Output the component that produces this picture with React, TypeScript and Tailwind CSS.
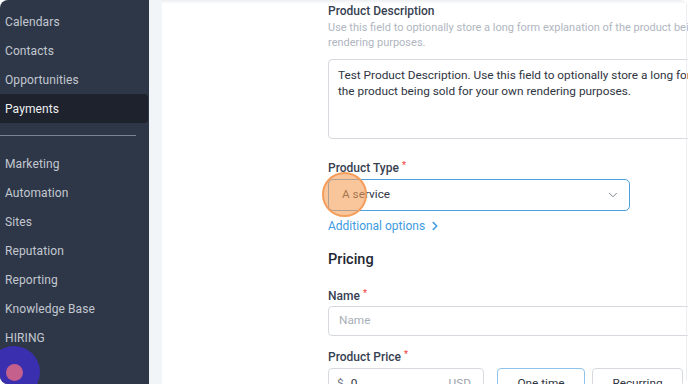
import { ChevronDown, ChevronRight } from "lucide-react";

const topItems = ["Calendars", "Contacts", "Opportunities", "Payments"];
const bottomItems = ["Marketing", "Automation", "Sites", "Reputation", "Reporting", "Knowledge Base", "HIRING"];

function NavItem({ label, active }: { label: string; active?: boolean }) {
    return (
        <div
            className={
                active
                    ? "h-[29px] flex items-center pl-[5px] mr-[1px] rounded-r-[4px] bg-[#1e222c] text-[#eef0f3]"
                    : "h-[29px] flex items-center pl-[5px] text-[#c3c8d0]"
            }
        >
            {label}
        </div>
    );
}

function Req() {
    return <span className="text-[#ef4444] text-[9px] align-top ml-[3px] relative top-[-3px]">*</span>;
}

export default function App() {
    return (
        <div className="w-[688px] h-[384px] overflow-hidden rounded-[8px] flex bg-white font-['Roboto',sans-serif] relative">
            <aside className="w-[149px] shrink-0 bg-[#2e3748] text-[12px] tracking-[0.1px] pt-[7px] relative">
                {topItems.map((i) => (
                    <NavItem key={i} label={i} active={i === "Payments"} />
                ))}
                <div className="h-px w-[136px] bg-[#7b8290] mt-[12px] mb-[13px]" />
                {bottomItems.map((i) => (
                    <NavItem key={i} label={i} />
                ))}
                {/* click marker */}
                <div className="absolute left-[-12px] top-[346px] w-[52px] h-[52px] rounded-full bg-[#3a2fae] flex items-center justify-center">
                    <div className="w-[17px] h-[17px] rounded-full bg-[#c5608c]" />
                </div>
            </aside>
            <div className="w-[13px] shrink-0 bg-[#f2f5f8]" />
            <main className="flex-1 bg-white relative overflow-hidden">
                <div className="absolute top-0 left-0 right-0 h-[4px] bg-gradient-to-b from-[#eceef1] to-white" />
                <div className="absolute top-0 bottom-0 right-[1px] w-px bg-[#eceef1]" />
                <div className="ml-[166px] w-[480px] pt-[3px] text-[#374151]">
                    <div className="text-[12px] leading-[16px] font-medium">Product Description</div>
                    <div className="mt-[1px] text-[11px] leading-[15px] text-[#b0b6bf] whitespace-nowrap">
                        Use this field to optionally store a long form explanation of the product being sold for your own
                        <br />
                        rendering purposes.
                    </div>
                    <div className="mt-[9px] h-[80px] border border-[#d6d9de] rounded-[4px] px-[9px] pt-[7px] text-[11.8px] leading-[16px] text-[#2f3542] whitespace-nowrap">
                        Test Product Description. Use this field to optionally store a long form explanation of
                        <br />
                        the product being sold for your own rendering purposes.
                    </div>

                    <div className="mt-[21px] text-[12px] leading-[16px] font-medium">
                        Product Type
                        <Req />
                    </div>
                    <div className="relative mt-[3px] w-[302px] h-[32px] border-[1.5px] border-[#4ba0de] rounded-[5px] flex items-center justify-between pl-[13px] pr-[9px] text-[11.8px] text-[#2f3542]">
                        <span>A service</span>
                        <ChevronDown size={14} strokeWidth={1.5} className="text-[#6b7280]" />
                        <div className="absolute left-[-7px] top-[-8px] w-[45px] h-[45px] rounded-full bg-[#f5a05a]/60 border-2 border-[#f59e5c]" />
                    </div>
                    <div className="mt-[7px] flex items-center gap-[3px] text-[12px] leading-[16px] text-[#3d9be0]">
                        Additional options
                        <ChevronRight size={14} strokeWidth={2.75} />
                    </div>

                    <div className="mt-[16px] text-[14.5px] leading-[20px] font-medium text-[#1f2633]">Pricing</div>

                    <div className="mt-[18px] text-[12px] leading-[16px] font-medium">
                        Name
                        <Req />
                    </div>
                    <div className="mt-[2px] h-[30px] border border-[#d6d9de] rounded-[4px] flex items-center pl-[10px] text-[11.8px] text-[#a9afb8]">
                        Name
                    </div>

                    <div className="mt-[13px] text-[12px] leading-[16px] font-medium">
                        Product Price
                        <Req />
                    </div>
                    <div className="mt-[3px] flex gap-[13px] text-[11.8px]">
                        <div className="w-[156px] h-[32px] border border-[#d6d9de] rounded-[4px] flex items-center pl-[8px] pr-[12px]">
                            <span className="text-[#6b7280]">$</span>
                            <span className="ml-[7px] text-[#2f3542]">0</span>
                            <span className="ml-auto text-[#9aa1ab]">USD</span>
                        </div>
                        <div className="flex gap-[7px]">
                            <div className="w-[88px] h-[32px] border-[1.5px] border-[#8ec3ec] rounded-[4px] flex items-center justify-center text-[#2f3542]">
                                One time
                            </div>
                            <div className="w-[91px] h-[32px] border border-[#d6d9de] rounded-[4px] flex items-center justify-center text-[#2f3542]">
                                Recurring
                            </div>
                        </div>
                    </div>
                </div>
            </main>
        </div>
    );
}
